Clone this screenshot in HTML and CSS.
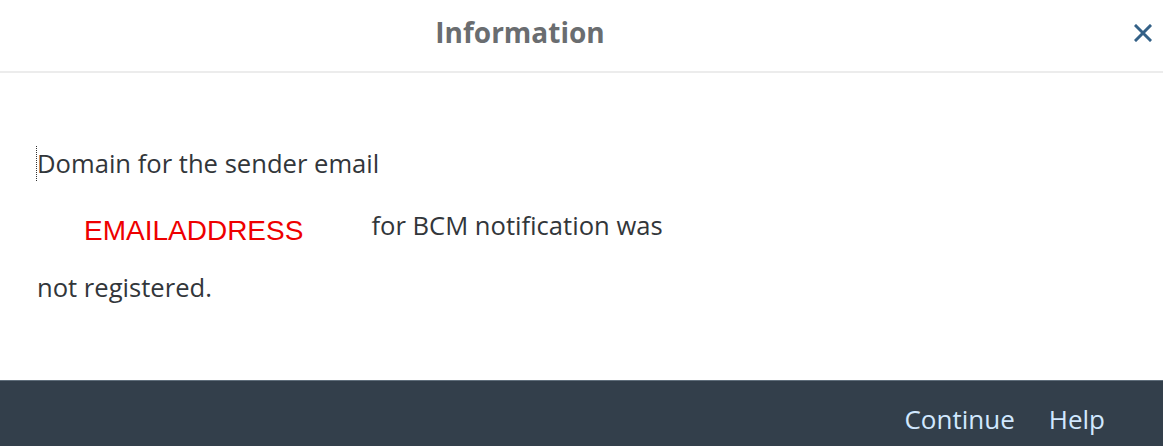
FILE: index.html
```html
<!DOCTYPE html>
<html lang="en">
<head>
  <meta charset="UTF-8">
  <title>Information</title>
  <link rel="stylesheet" href="styles.css">
</head>
<body>
  <div class="dialog">
    <header class="dlg-head">
      <h1>Information</h1>
      <button class="close" aria-label="Close">
        <svg width="18" height="18" viewBox="0 0 18 18">
          <path d="M2 2 L16 16 M16 2 L2 16" stroke="#346187" stroke-width="3" stroke-linecap="square" fill="none"/>
        </svg>
      </button>
    </header>

    <main class="dlg-body">
      <p class="line"><span class="focus">Domain for the sender email</span></p>
      <p class="line mid">
        <span class="var">EMAILADDRESS</span>
        <span class="rest">for BCM notification was</span>
      </p>
      <p class="line">not registered.</p>
    </main>

    <footer class="dlg-foot">
      <a href="#" class="btn">Continue</a>
      <a href="#" class="btn">Help</a>
    </footer>
  </div>
</body>
</html>
```

FILE: styles.css
```css
body {
  margin: 0;
  font-family: 'Open Sans', 'Noto Sans', sans-serif;
  background: #fff;
  color: #32363a;
}
.dialog {
  height: 446px;
  display: flex;
  flex-direction: column;
}
.dlg-head {
  height: 73px;
  border-bottom: 2px solid #ececec;
  display: flex;
  align-items: center;
  justify-content: center;
  padding-right: 123px;
  position: relative;
  box-sizing: border-box;
}
.dlg-head h1 {
  margin: 0 0 8px 0;
  font-size: 28px;
  font-weight: 700;
  color: #6a6d70;
}
.close {
  position: absolute;
  right: 11px;
  top: 24px;
  border: 0;
  background: none;
  padding: 0;
  width: 18px;
  height: 18px;
}
.dlg-body {
  flex: 1;
  padding: 60px 37px 0;
}
.line {
  margin: 0;
  font-size: 25.6px;
  line-height: 62px;
  color: #32363a;
}
.focus {
  border-left: 1px dotted #333;
  margin-left: -1px;
}
.mid {
  display: flex;
  align-items: baseline;
}
.var {
  font-family: 'Liberation Sans', Arial, sans-serif;
  font-size: 28px;
  color: #ee0000;
  margin-left: 47px;
  position: relative;
  top: 5px;
}
.rest {
  margin-left: 68px;
}
.dlg-foot {
  height: 66px;
  background: #333f4b;
  border-top: 1px solid #5f6d7a;
  box-sizing: border-box;
  display: flex;
  justify-content: flex-end;
  align-items: center;
  padding: 10px 58px 0 0;
  gap: 34px;
}
.btn {
  font-size: 26px;
  color: #d1e8ff;
  text-decoration: none;
}
```
